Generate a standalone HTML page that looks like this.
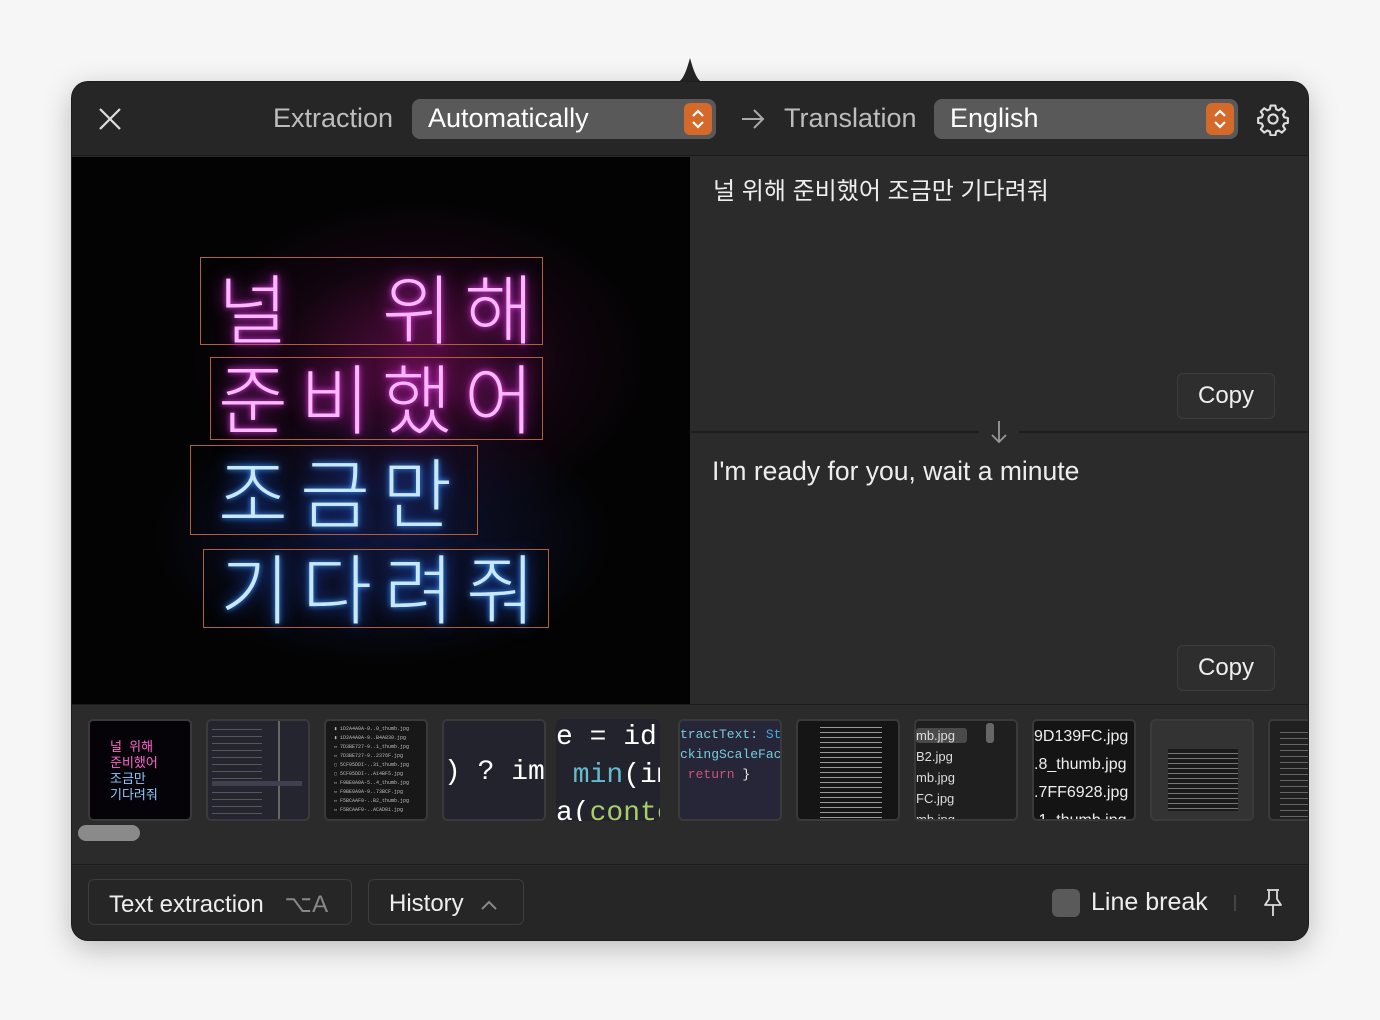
<!DOCTYPE html>
<html><head><meta charset="utf-8"><style>
*{box-sizing:border-box;margin:0;padding:0}
body{width:1380px;height:1020px;background:#f6f6f6;position:relative;overflow:hidden;font-family:"Liberation Sans","Noto Sans CJK KR",sans-serif;color:#e8e8e8}
.win{position:absolute;left:72px;top:82px;width:1236px;height:858px;background:#2b2b2b;border-radius:16px;overflow:hidden;box-shadow:0 0 0 1px #1c1c1c,0 8px 30px rgba(0,0,0,.25)}
.tip{position:absolute;left:670px;top:58px;width:40px;height:26px}
.abs{position:absolute}
.hdr{left:0;top:0;width:1236px;height:74px;background:#262626;border-bottom:1px solid #1a1a1a}
.lbl{font-size:27px;color:#bdbdbd;top:21px}
.sel{top:17px;height:40px;background:#595959;border-radius:8px;font-size:27px;color:#fff;padding:4px 0 0 16px}
.step{position:absolute;right:4px;top:4px;width:28px;height:32px;background:#d4692a;border-radius:6px}
.img{left:0;top:75px;width:618px;height:547px;background:#030303;overflow:hidden}
.box{position:absolute;border:1.5px solid #b0603c}
.neon{position:absolute;font-size:76px;font-weight:300;white-space:nowrap;line-height:80px}
.neon span{display:inline-block;width:82px;text-align:center}
.pk{color:#ffb8ff;text-shadow:0 0 6px #e040e0,0 0 18px #c020c0}
.bl{color:#c8e8ff;text-shadow:0 0 6px #40a0ff,0 0 18px #2060ff}
.rp{left:619px;top:75px;width:617px;height:547px;background:#2b2b2b}
.copy{position:absolute;width:98px;height:46px;border:1px solid #3d3d3d;border-radius:6px;background:#2e2e2e;font-size:24px;text-align:center;line-height:44px;color:#eee}
.strip{left:0;top:622px;width:1236px;height:161px;background:#2b2b2b;border-top:1px solid #1c1c1c;border-bottom:1px solid #1c1c1c}
.th{position:absolute;top:14px;width:104px;height:102px;border-radius:5px;border:2px solid #3a3a3a;background:#1c1c1c;overflow:hidden;font-family:"Liberation Mono",monospace}
.bot{left:0;top:784px;width:1236px;height:74px;background:#262626}
.btn{position:absolute;top:13px;height:46px;border:1px solid #3d3d3d;border-radius:6px;font-size:24px;padding:10px 0 0 20px;color:#eee}
</style></head><body>
<svg class="tip" viewBox="0 0 40 26"><path d="M0 26 C10 26 14 22 20 0 C26 22 30 26 40 26Z" fill="#262626"/></svg>
<div class="win">
 <div class="abs hdr">
  <svg class="abs" style="left:26px;top:25px" width="24" height="24" viewBox="0 0 24 24"><path d="M2 2L22 22M22 2L2 22" stroke="#ddd" stroke-width="2.2"/></svg>
  <div class="abs lbl" style="left:201px">Extraction</div>
  <div class="abs sel" style="left:340px;width:304px">Automatically<div class="step"><svg width="28" height="32" viewBox="0 0 28 32"><path d="M9 13l5-5 5 5M9 19l5 5 5-5" stroke="#fff" stroke-width="2.2" fill="none"/></svg></div></div>
  <svg class="abs" style="left:668px;top:25px" width="26" height="24" viewBox="0 0 26 24"><path d="M2 12H23M14 3l9 9-9 9" stroke="#aaa" stroke-width="2" fill="none"/></svg>
  <div class="abs lbl" style="left:712px">Translation</div>
  <div class="abs sel" style="left:862px;width:304px">English<div class="step"><svg width="28" height="32" viewBox="0 0 28 32"><path d="M9 13l5-5 5 5M9 19l5 5 5-5" stroke="#fff" stroke-width="2.2" fill="none"/></svg></div></div>
  <svg class="abs" style="left:1184px;top:20px" width="34" height="34" viewBox="0 0 24 24"><circle cx="12" cy="12" r="3.2" stroke="#ddd" stroke-width="1.5" fill="none"/><path d="M10.3 2.5h3.4l.5 2.6 1.8.8 2.2-1.5 2.4 2.4-1.5 2.2.8 1.8 2.6.5v3.4l-2.6.5-.8 1.8 1.5 2.2-2.4 2.4-2.2-1.5-1.8.8-.5 2.6h-3.4l-.5-2.6-1.8-.8-2.2 1.5-2.4-2.4 1.5-2.2-.8-1.8-2.6-.5v-3.4l2.6-.5.8-1.8-1.5-2.2 2.4-2.4 2.2 1.5 1.8-.8z" stroke="#ddd" stroke-width="1.5" fill="none" stroke-linejoin="round"/></svg>
 </div>
 <div class="abs img">
  <div class="abs" style="left:60px;top:40px;width:520px;height:360px;background:radial-gradient(closest-side at 55% 45%,rgba(150,20,110,.55),rgba(60,10,50,.25) 60%,rgba(0,0,0,0) 100%)"></div>
  <div class="abs" style="left:80px;top:250px;width:460px;height:260px;background:radial-gradient(closest-side,rgba(30,40,110,.5),rgba(0,0,0,0) 100%)"></div>
  <div class="box" style="left:128px;top:100px;width:343px;height:88px"></div>
  <div class="box" style="left:138px;top:200px;width:333px;height:83px"></div>
  <div class="box" style="left:118px;top:288px;width:288px;height:90px"></div>
  <div class="box" style="left:131px;top:392px;width:346px;height:79px"></div>
  <div class="neon pk" style="left:140px;top:116px"><span>널</span><span></span><span>위</span><span>해</span></div>
  <div class="neon pk" style="left:140px;top:206px"><span>준</span><span>비</span><span>했</span><span>어</span></div>
  <div class="neon bl" style="left:140px;top:300px"><span>조</span><span>금</span><span>만</span></div>
  <div class="neon bl" style="left:142px;top:396px"><span>기</span><span>다</span><span>려</span><span>줘</span></div>
 </div>
 <div class="abs rp">
  <div class="abs" style="left:22px;top:14px;font-size:24px;color:#eee">널 위해 준비했어 조금만 기다려줘</div>
  <div class="copy" style="left:486px;top:216px">Copy</div>
  <div class="abs" style="left:0;top:274px;width:617px;height:2px;background:#1e1e1e"></div>
  <div class="abs" style="left:288px;top:262px;width:40px;height:26px;background:#2b2b2b"></div>
  <svg class="abs" style="left:298px;top:262px" width="20" height="26" viewBox="0 0 20 26"><path d="M10 2V23M3 16l7 7 7-7" stroke="#999" stroke-width="1.8" fill="none"/></svg>
  <div class="abs" style="left:21px;top:299px;font-size:26.5px;color:#eee">I'm ready for you, wait a minute</div>
  <div class="copy" style="left:486px;top:488px">Copy</div>
 </div>
 <div class="abs strip">
  <div class="th" style="left:16px;background:#050208;font-family:'Liberation Sans','Noto Sans CJK KR',sans-serif;font-size:13px;line-height:16px;padding:18px 0 0 20px"><span style="color:#f6c">널&nbsp;&nbsp;위해<br>준비했어</span><br><span style="color:#8cf">조금만<br>기다려줘</span></div>
  <div class="th" style="left:134px;background:#252530"><div class="abs" style="left:4px;top:2px;width:50px;height:96px;background:repeating-linear-gradient(#252530 0 6px,#777 6px 7px);opacity:.6"></div><div class="abs" style="left:70px;top:0;width:2px;height:102px;background:#666"></div><div class="abs" style="left:4px;top:60px;width:90px;height:5px;background:#404050"></div></div>
  <div class="th" style="left:252px;background:#181818;font-size:5px;color:#bbb;line-height:9px;padding:4px 8px">▮ 1D2A4A0A-9..0_thumb.jpg<br>▮ 1D2A4A0A-9..B4A830.jpg<br>▭ 7D3BE727-9..1_thumb.jpg<br>▭ 7D3BE727-9..2376F.jpg<br>▢ 5CF05DDI-..31_thumb.jpg<br>▢ 5CF05DDI-..A14BF5.jpg<br>▭ F9BE0A0A-5..4_thumb.jpg<br>▭ F9BE0A0A-9..73BCF.jpg<br>▭ F5BCAAF0-..B2_thumb.jpg<br>▭ F5BCAAF0-..ACAD81.jpg</div>
  <div class="th" style="left:370px;background:#23232d;color:#fff;font-size:28px;padding-top:36px;white-space:nowrap">)&nbsp;?&nbsp;im</div>
  <div class="th" style="left:488px;background:#23232d;color:#fff;font-size:28px;line-height:38px;white-space:nowrap;padding-left:0;margin-left:-4px;border:none">e = id<br><span style="color:#6bc">&nbsp;min</span>(im<br>a(<span style="color:#ac6">conte</span></div>
  <div class="th" style="left:606px;background:#262638;font-size:13px;line-height:20px;white-space:nowrap;color:#7cd;padding-top:4px">tractText: <span style="color:#4ad">St</span><br>ckingScaleFac<br><span style="color:#c57">&nbsp;return</span> <span style="color:#eee">}</span></div>
  <div class="th" style="left:724px;background:#151515"><div class="abs" style="left:22px;top:2px;width:62px;height:96px;background:repeating-linear-gradient(#151515 0 4px,#999 4px 5px)"></div></div>
  <div class="th" style="left:842px;background:#1f1f1f;font-family:'Liberation Sans',sans-serif;font-size:13px;line-height:21px;color:#ddd;padding-top:4px"><span style="background:#4a4a4a;padding:0 12px 0 0;border-radius:3px">mb.jpg</span><br>B2.jpg<br>mb.jpg<br>FC.jpg<br>mb.jpg<div class="abs" style="left:70px;top:2px;width:8px;height:20px;background:#666;border-radius:3px"></div></div>
  <div class="th" style="left:960px;background:#141414;font-family:'Liberation Sans',sans-serif;font-size:16px;line-height:28px;color:#eee;padding-top:2px;white-space:nowrap">9D139FC.jpg<br>.8_thumb.jpg<br>.7FF6928.jpg<br>.1_thumb.jpg</div>
  <div class="th" style="left:1078px;background:#333"><div class="abs" style="left:16px;top:28px;width:70px;height:62px;background:repeating-linear-gradient(#1a1a1a 0 4px,#777 4px 5px)"></div></div>
  <div class="th" style="left:1196px;background:#202020"><div class="abs" style="left:10px;top:6px;width:40px;height:90px;background:repeating-linear-gradient(#202020 0 5px,#666 5px 6px)"></div></div>
  <div class="abs" style="left:6px;top:120px;width:62px;height:16px;border-radius:8px;background:#8a8a8a"></div>
 </div>
 <div class="abs bot">
  <div class="btn" style="left:16px;width:264px">Text extraction <span style="color:#888;margin-left:14px">⌥A</span></div>
  <div class="btn" style="left:296px;width:156px">History <svg width="18" height="12" viewBox="0 0 18 12" style="margin-left:10px"><path d="M2 10l7-7 7 7" stroke="#888" stroke-width="2" fill="none"/></svg></div>
  <div class="abs" style="left:980px;top:23px;width:28px;height:28px;background:#5a5a5a;border-radius:6px"></div>
  <div class="abs" style="left:1019px;top:22px;font-size:25px;color:#eee">Line break</div>
  <div class="abs" style="left:1162px;top:29px;width:2px;height:16px;background:#444"></div>
  <svg class="abs" style="left:1188px;top:21px" width="26" height="32" viewBox="0 0 26 32"><path d="M7 3h12M9 3v9l-4 6h16l-4-6V3M13 18v11" stroke="#ddd" stroke-width="1.8" fill="none" stroke-linejoin="round"/></svg>
 </div>
</div>
</body></html>
